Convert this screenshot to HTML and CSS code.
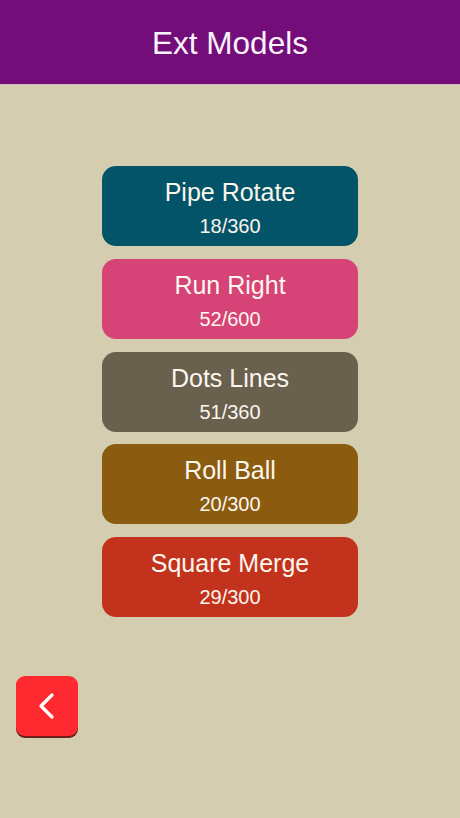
FILE: index.html
```html
<!DOCTYPE html>
<html lang="en">
<head>
  <meta charset="UTF-8">
  <title>Ext Models</title>
  <link rel="stylesheet" href="styles.css">
</head>
<body>

  <!-- Top bar -->
  <header class="topbar">
    <h1>Ext Models</h1>
  </header>

  <!-- Model list -->
  <section class="models">
    <button class="model pipe">
      <span class="name">Pipe Rotate</span>
      <span class="count">18/360</span>
    </button>
    <button class="model run">
      <span class="name">Run Right</span>
      <span class="count">52/600</span>
    </button>
    <button class="model dots">
      <span class="name">Dots Lines</span>
      <span class="count">51/360</span>
    </button>
    <button class="model roll">
      <span class="name">Roll Ball</span>
      <span class="count">20/300</span>
    </button>
    <button class="model square">
      <span class="name">Square Merge</span>
      <span class="count">29/300</span>
    </button>
  </section>

  <!-- Back -->
  <div class="footer">
    <button class="back-btn" aria-label="Back">
      <svg width="24" height="28" viewBox="0 0 24 28">
        <path d="M17 3 L6 14 L17 25" fill="none" stroke="#fff" stroke-width="3.2" stroke-linecap="round" stroke-linejoin="round"/>
      </svg>
    </button>
  </div>

</body>
</html>
```

FILE: styles.css
```css
* {
  margin: 0;
  padding: 0;
  box-sizing: border-box;
}

body {
  font-family: 'Liberation Sans', Arial, sans-serif;
  color: #fff;
  background: #d4cdaf;
  height: 818px;
  overflow: hidden;
}

.topbar {
  height: 85px;
  background: #730d7a;
  border-bottom: 1px solid #d6b9c2;
  text-align: center;
}

.topbar h1 {
  font-size: 31.5px;
  font-weight: normal;
  line-height: 82px;
  padding-top: 2px;
  color: #fbf3fb;
}

.models {
  display: flex;
  flex-direction: column;
  align-items: center;
  gap: 12.75px;
  margin-top: 81px;
}

.model {
  display: flex;
  flex-direction: column;
  align-items: center;
  width: 256px;
  height: 80px;
  padding-top: 11px;
  border: none;
  border-radius: 14px;
  font-family: inherit;
  color: #fbf6ee;
  cursor: pointer;
}

.model .name {
  font-size: 25px;
  line-height: 30px;
}

.model .count {
  font-size: 20px;
  line-height: 24px;
  margin-top: 7px;
}

.pipe { background: #045469; }
.run { background: #d64376; }
.dots { background: #6a604e; }
.roll { background: #8b5c10; }
.square { background: #c3321c; }

.footer {
  padding: 59px 0 0 16px;
}

.back-btn {
  display: flex;
  align-items: center;
  justify-content: center;
  width: 62px;
  height: 60px;
  border: none;
  border-radius: 9px;
  background: #fe2a2f;
  box-shadow: 0 2px 0 #6b1f16;
  cursor: pointer;
}
```
